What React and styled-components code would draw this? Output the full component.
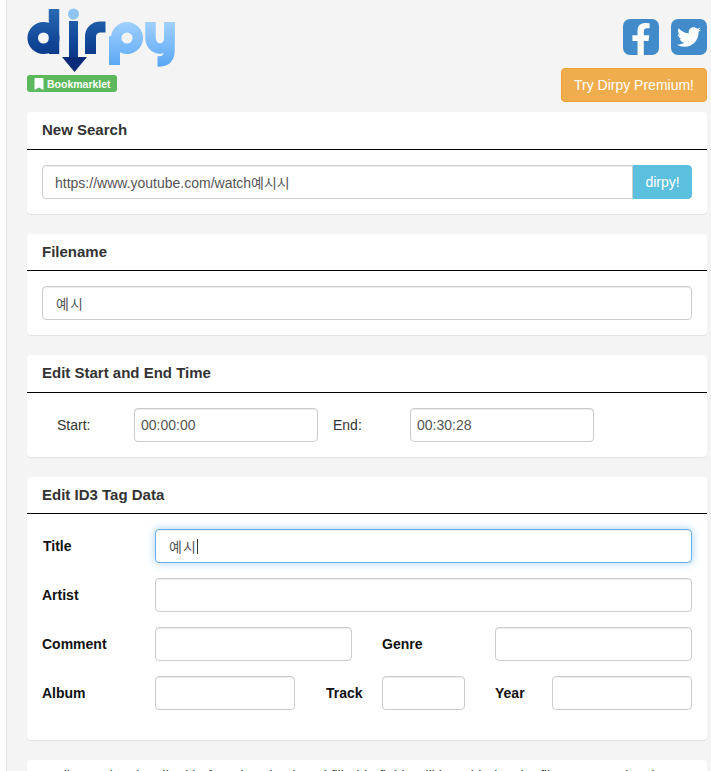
import React from 'react';
import styled, { createGlobalStyle } from 'styled-components';
import { FaFacebookF, FaTwitter, FaBookmark } from 'react-icons/fa';

const GlobalStyle = createGlobalStyle`
  html, body {
    margin: 0;
    height: 100%;
    overflow: hidden;
    background: #fff;
  }
  body {
    font-family: "Liberation Sans", "Noto Sans CJK KR", Arial, sans-serif;
    font-size: 14px;
    color: #333;
  }
`;

const Page = styled.div`
  margin-left: 6px;
  height: 771px;
  overflow: hidden;
  padding: 0 4px 0 20px;
  background: #f4f4f4;
  border-left: 1px solid #e4e4e4;
`;

const Header = styled.header`
  height: 112px;
  display: flex;
  justify-content: space-between;
`;

const Brand = styled.div`
  padding-top: 8px;
  display: flex;
  flex-direction: column;
  align-items: flex-start;
  gap: 3px;
`;

const Logo = styled.svg`
  display: block;
  width: 150px;
  height: 64px;
`;

const Badge = styled.a`
  display: flex;
  align-items: center;
  gap: 2px;
  box-sizing: border-box;
  width: 90px;
  height: 17px;
  padding-left: 6px;
  border-radius: 3px;
  background: #5cb85c;
  color: #fff;
  font-size: 10.5px;
  font-weight: 700;
`;

const Actions = styled.div`
  padding-top: 19px;
  display: flex;
  flex-direction: column;
  align-items: flex-end;
  gap: 13px;
`;

const Socials = styled.div`
  display: flex;
  gap: 12px;
`;

const Social = styled.a`
  width: 36px;
  height: 36px;
  display: flex;
  align-items: flex-end;
  justify-content: center;
  overflow: hidden;
  border-radius: 7px;
  background: #428bca;
  color: #fff;
  svg {
    display: block;
  }
`;

const TwitterTile = styled(Social)`
  align-items: center;
`;

const PremiumButton = styled.button`
  width: 146px;
  height: 34px;
  padding: 0;
  border: 1px solid #eea236;
  border-radius: 4px;
  background: #f0ad4e;
  color: #fff;
  font: 14px "Liberation Sans", Arial, sans-serif;
`;

const Panel = styled.section`
  box-sizing: border-box;
  height: ${props => props.$height}px;
  margin-bottom: 20px;
  border-radius: 4px;
  background: #fff;
  box-shadow: 0 1px 1px rgba(0, 0, 0, 0.07);
`;

const PanelHeading = styled.h3`
  box-sizing: border-box;
  margin: 0;
  height: ${props => props.$height || 38}px;
  padding: 9px 15px 0;
  border-bottom: 1px solid #000;
  font-size: 15px;
  line-height: 17px;
  font-weight: 700;
  color: #333;
`;

const PanelBody = styled.div`
  padding: 15px 15px 0;
`;

const InputGroup = styled.div`
  display: flex;
`;

const TextInput = styled.input`
  box-sizing: border-box;
  display: block;
  flex: ${props => (props.$width ? `0 0 ${props.$width}px` : '1 1 auto')};
  min-width: 0;
  width: 100%;
  height: 34px;
  padding: 0 ${props => props.$pad || 12}px;
  border: 1px solid #ccc;
  border-radius: 4px;
  background: #fff;
  color: #555;
  font: 14px "Liberation Sans", "Noto Sans CJK KR", Arial, sans-serif;
  letter-spacing: ${props => props.$spacing || 0}px;
  outline: none;
  box-shadow: inset 0 1px 1px rgba(0, 0, 0, 0.075);

  &:focus {
    border-color: #66afe9;
    box-shadow: inset 0 1px 1px rgba(0, 0, 0, 0.075), 0 0 8px rgba(102, 175, 233, 0.6);
  }
`;

const UrlInput = styled(TextInput)`
  border-radius: 4px 0 0 4px;
`;

const DirpyButton = styled.button`
  flex: 0 0 59px;
  height: 34px;
  padding: 0;
  border: 1px solid #5bc0de;
  border-radius: 0 4px 4px 0;
  background: #5bc0de;
  color: #fff;
  font: 14px "Liberation Sans", Arial, sans-serif;
`;

const TimeRow = styled.div`
  display: flex;
  align-items: center;
  padding-left: 15px;
`;

const TimeLabel = styled.label`
  flex: 0 0 ${props => props.$width}px;
  margin-left: ${props => props.$offset || 0}px;
  color: #333;
`;

const TagRows = styled.div`
  display: flex;
  flex-direction: column;
  gap: 15px;
`;

const TagRow = styled.div`
  display: flex;
  align-items: center;
`;

const TagLabel = styled.label`
  flex: 0 0 ${props => props.$width}px;
  margin-left: ${props => props.$offset || 0}px;
  font-weight: 700;
  color: #111;
`;

const FocusedField = styled.div`
  position: relative;
  flex: 1 1 auto;
`;

const Caret = styled.span`
  position: absolute;
  left: 42px;
  top: 10px;
  width: 1px;
  height: 15px;
  background: #333;
`;

const FooterText = styled.p`
  margin: 0;
  padding: 6px 15px 0;
  text-align: center;
  font-size: 14px;
  line-height: 20px;
  color: #333;
`;

const DirpyLogo = () => (
  <Logo viewBox="27 8 150 64" fill="none">
    <defs>
      <linearGradient id="dark" gradientUnits="userSpaceOnUse" x1="0" y1="8" x2="0" y2="72">
        <stop offset="0" stopColor="#2a6cb4" />
        <stop offset="0.55" stopColor="#0f4596" />
        <stop offset="1" stopColor="#0a2c78" />
      </linearGradient>
      <linearGradient id="light" gradientUnits="userSpaceOnUse" x1="0" y1="22" x2="0" y2="67">
        <stop offset="0" stopColor="#9fd0ff" />
        <stop offset="1" stopColor="#5aa6f4" />
      </linearGradient>
    </defs>
    <g stroke="url(#dark)" strokeWidth="10.5">
      <circle cx="43.5" cy="38" r="10.8" />
      <path d="M54 9V54" />
      <path d="M73.5 21V58" strokeWidth="9" />
      <path d="M90.5 54V37c0-6 4-10 10-10h5" strokeWidth="11" />
    </g>
    <circle cx="73.5" cy="14" r="5.5" fill="#8fc4f0" />
    <path d="M62 57h25L74.5 72z" fill="#0a2c78" />
    <g stroke="url(#light)" strokeWidth="10.5">
      <path d="M114.5 65V36" strokeWidth="11" />
      <circle cx="127" cy="38" r="10.8" />
      <path d="M150.5 22V38a9.5 10.5 0 0 0 19 0V22" />
      <path d="M169.5 22V50c0 8-4 11.5-12 11.5" />
    </g>
  </Logo>
);

export default function App() {
  return (
    <>
      <GlobalStyle />
      <Page>
        <Header>
          <Brand>
            <DirpyLogo />
            <Badge>
              <FaBookmark size={12} />
              Bookmarklet
            </Badge>
          </Brand>
          <Actions>
            <Socials>
              <Social>
                <FaFacebookF size={32} />
              </Social>
              <TwitterTile>
                <FaTwitter size={24} />
              </TwitterTile>
            </Socials>
            <PremiumButton>Try Dirpy Premium!</PremiumButton>
          </Actions>
        </Header>

        <Panel $height={102}>
          <PanelHeading>New Search</PanelHeading>
          <PanelBody>
            <InputGroup>
              <UrlInput readOnly value="https://www.youtube.com/watch예시시" />
              <DirpyButton>dirpy!</DirpyButton>
            </InputGroup>
          </PanelBody>
        </Panel>

        <Panel $height={101}>
          <PanelHeading $height={37}>Filename</PanelHeading>
          <PanelBody>
            <InputGroup>
              <TextInput readOnly $pad={13} $spacing={1} value="예시" />
            </InputGroup>
          </PanelBody>
        </Panel>

        <Panel $height={102}>
          <PanelHeading>Edit Start and End Time</PanelHeading>
          <PanelBody>
            <TimeRow>
              <TimeLabel $width={77}>Start:</TimeLabel>
              <TextInput readOnly $width={184} $pad={6} value="00:00:00" />
              <TimeLabel $width={77} $offset={15}>End:</TimeLabel>
              <TextInput readOnly $width={184} $pad={6} value="00:30:28" />
            </TimeRow>
          </PanelBody>
        </Panel>

        <Panel $height={263}>
          <PanelHeading $height={37}>Edit ID3 Tag Data</PanelHeading>
          <PanelBody>
            <TagRows>
              <TagRow>
                <TagLabel $width={112} $offset={1}>Title</TagLabel>
                <FocusedField>
                  <TextInput autoFocus readOnly $pad={13} $spacing={1} value="예시" />
                  <Caret />
                </FocusedField>
              </TagRow>
              <TagRow>
                <TagLabel $width={113}>Artist</TagLabel>
                <TextInput readOnly />
              </TagRow>
              <TagRow>
                <TagLabel $width={113}>Comment</TagLabel>
                <TextInput readOnly $width={197} />
                <TagLabel $width={113} $offset={30}>Genre</TagLabel>
                <TextInput readOnly $width={197} />
              </TagRow>
              <TagRow>
                <TagLabel $width={113}>Album</TagLabel>
                <TextInput readOnly $width={140} />
                <TagLabel $width={56} $offset={31}>Track</TagLabel>
                <TextInput readOnly $width={83} />
                <TagLabel $width={57} $offset={30}>Year</TagLabel>
                <TextInput readOnly $width={140} />
              </TagRow>
            </TagRows>
          </PanelBody>
        </Panel>

        <Panel $height={60}>
          <FooterText>All metadata is edited before download, and filled-in fields will be added to the file's ID3 tag data here now.</FooterText>
        </Panel>
      </Page>
    </>
  );
}
